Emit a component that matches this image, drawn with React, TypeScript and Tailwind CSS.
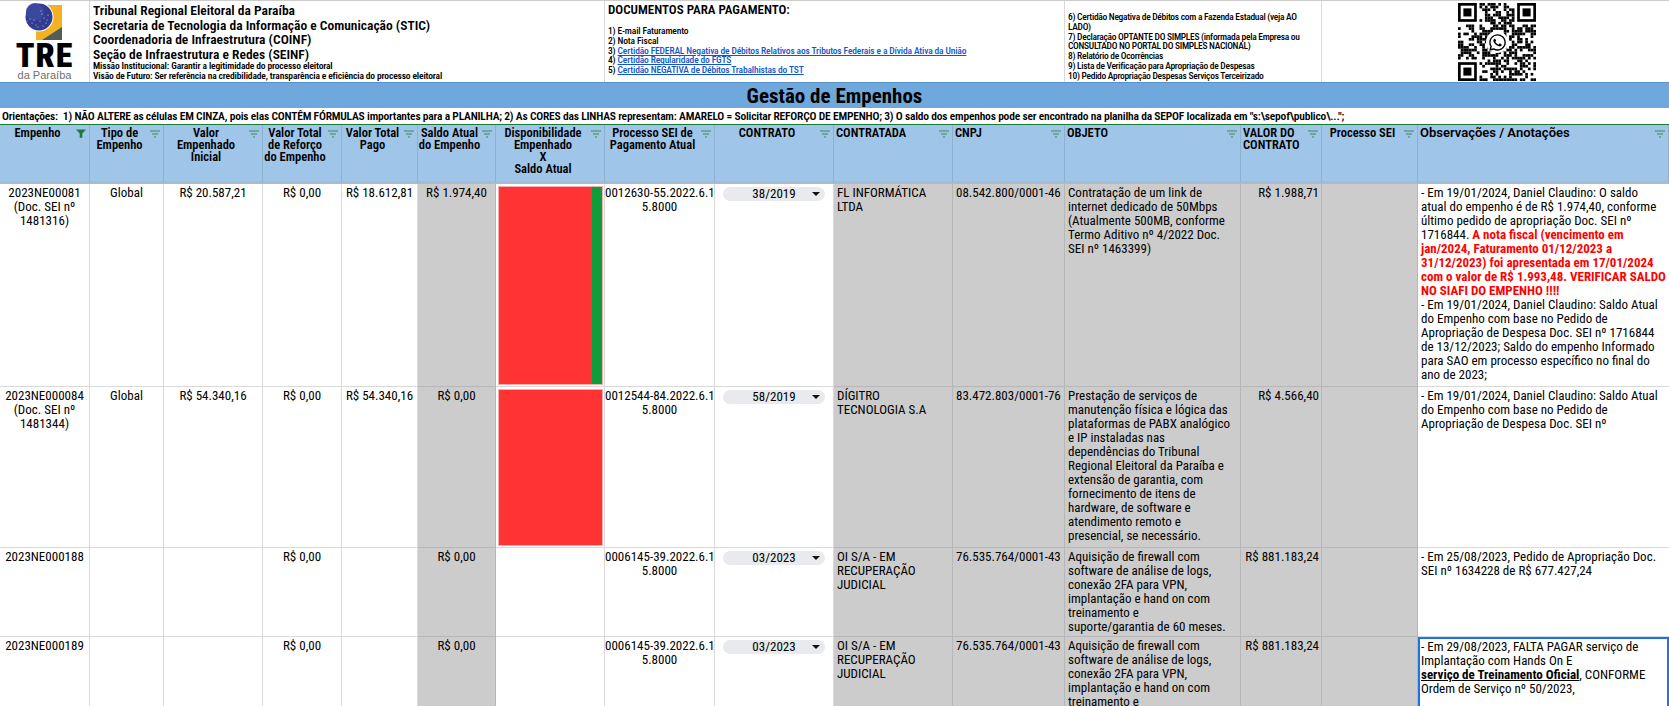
import type { ReactNode } from "react";
import { FaWhatsapp } from "react-icons/fa";

const widths = [90, 74, 99, 79, 76, 78, 109, 110, 119, 119, 112, 176, 81, 96, 251];

function FilterIcon({ active }: { active?: boolean }) {
  if (active) {
    return (
      <svg viewBox="0 0 10 9" className="absolute top-[4px] right-[3px] w-[10px] h-[9px]">
        <path d="M0 0.5h10L6.3 4.6V8.8H3.7V4.6z" fill="#1d7a3c" />
      </svg>
    );
  }
  return (
    <svg viewBox="0 0 10 8" className="absolute top-[5px] right-[3px] w-[10px] h-[8px]">
      <path d="M0 1h10M2 4h6M4 7h2" stroke="#5f9f7f" strokeWidth="1.3" fill="none" />
    </svg>
  );
}

function Head({ lines, left, active, wide }: { lines: string[]; left?: boolean; active?: boolean; wide?: boolean }) {
  return (
    <th
      className={`relative align-top p-0 pt-[2px] border-r border-b-[3px] border-r-[#8fb1d0] border-b-[#a9bccf] font-semibold leading-[12px] ${
        wide ? "text-[13px] font-stretch-[88%]" : "text-[12.5px] font-stretch-[75%]"
      } ${left ? "text-left pl-[2px]" : "text-center pr-[14px]"}`}
    >
      {lines.map((l, i) => (
        <div key={i} className="whitespace-nowrap">{l}</div>
      ))}
      <FilterIcon active={active} />
    </th>
  );
}

function Cell({
  lines,
  align = "center",
  gray,
  last,
}: {
  lines?: string[];
  align?: "left" | "center" | "right";
  gray?: boolean;
  last?: boolean;
}) {
  const a = align === "left" ? "text-left pl-[3px]" : align === "right" ? "text-right pr-[2px]" : "text-center";
  return (
    <td
      className={`align-top p-0 pt-[2px] overflow-hidden border-b ${last ? "" : "border-r"} ${a} ${
        gray ? "bg-[#cccccc] border-[#b7b7b7]" : "bg-white border-[#dadada]"
      }`}
    >
      {(lines ?? []).map((l, i) => (
        <div key={i} className="whitespace-nowrap">{l}</div>
      ))}
    </td>
  );
}

function Bar({ full, height }: { full: boolean; height: string }) {
  return (
    <td className="align-top p-0 bg-white border-r border-b border-[#dadada]">
      <div className={`flex ml-[2px] mt-[2px] w-[105px] border border-[#f3b0b0] ${height}`}>
        <div className="flex-1 bg-[#ff3333]" />
        {!full && <div className="w-[10px] bg-[#0f9d3c]" />}
      </div>
    </td>
  );
}

function BlankBar() {
  return <td className="p-0 bg-white border-r border-b border-[#dadada]" />;
}

function Chip({ label }: { label: string }) {
  return (
    <td className="align-top p-0 pt-[3px] bg-white border-r border-b border-[#dadada]">
      <div className="relative mx-[8px] h-[14px] rounded-full bg-[#e8eaed] text-center leading-[14px]">
        {label}
        <span className="absolute right-[5px] top-[5px] w-0 h-0 border-x-[4px] border-x-transparent border-t-[4px] border-t-[#111]" />
      </div>
    </td>
  );
}

function Qr() {
  const n = 29;
  let seed = 4721;
  const rnd = () => {
    seed = (seed * 1103515245 + 12345) & 0x7fffffff;
    return (seed >> 12) % 100;
  };
  const rects: ReactNode[] = [];
  const inFinder = (x: number, y: number) =>
    (x < 8 && y < 8) || (x >= n - 8 && y < 8) || (x < 8 && y >= n - 8);
  for (let y = 0; y < n; y++) {
    for (let x = 0; x < n; x++) {
      if (inFinder(x, y)) continue;
      if (rnd() < 52) rects.push(<rect key={`${x}-${y}`} x={x} y={y} width={1} height={1} />);
    }
  }
  const finder = (x: number, y: number) => (
    <g key={`f${x}${y}`}>
      <rect x={x} y={y} width={7} height={7} />
      <rect x={x + 1} y={y + 1} width={5} height={5} fill="#fff" />
      <rect x={x + 2} y={y + 2} width={3} height={3} />
    </g>
  );
  return (
    <div className="relative w-[78px] h-[78px]">
      <svg viewBox="0 0 29 29" className="w-[78px] h-[78px]" fill="#000">
        {rects}
        {finder(0, 0)}
        {finder(22, 0)}
        {finder(0, 22)}
      </svg>
      <div className="absolute left-[28px] top-[28px] w-[22px] h-[22px] rounded-full bg-white flex items-center justify-center">
        <FaWhatsapp className="w-[19px] h-[19px] text-black" />
      </div>
    </div>
  );
}

function Logo() {
  return (
    <div className="w-[90px] shrink-0 h-full border-r border-[#d9d9d9] flex flex-col items-center">
      <svg viewBox="0 0 90 41" className="w-[90px] h-[41px] shrink-0">
        <path d="M36 4H62V39H36z" fill="#f4b223" />
        <path d="M62 26V39H42z" fill="#4f5f58" />
        <circle cx="39" cy="16" r="14.5" fill="#fff" />
        <circle cx="39" cy="16" r="13.5" fill="#2f3c8f" />
        <circle cx="35" cy="11" r="9" fill="#3a489e" />
        {[
          [32, 22],[36, 24],[40, 20],[44, 17],[42, 13],[46, 22],[30, 18],[38, 26],[43, 25],[48, 14],[34, 19],[41, 10],[27, 20],[47, 19],
        ].map(([x, y], i) => (
          <circle key={i} cx={x} cy={y} r="0.6" fill="#cfd6f0" />
        ))}
      </svg>
      <div className="h-[25px] mt-[1px] font-black text-[34px] leading-[25px] tracking-[1px] font-stretch-[86%] text-black">
        TRE
      </div>
      <div className="mt-[2px] font-['Liberation_Sans',sans-serif] text-[11px] leading-[11px] text-[#707070]">
        da Paraíba
      </div>
    </div>
  );
}

const firewall = [
  "Aquisição de firewall com",
  "software de análise de logs,",
  "conexão 2FA para VPN,",
  "implantação e hand on com",
  "treinamento e",
  "suporte/garantia de 60 meses.",
];

export default function App() {
  return (
    <div className="w-[1669px] h-[706px] overflow-hidden bg-white text-black font-['Roboto',sans-serif] font-stretch-[80%] text-[13px] leading-[14px]">
      {/* Top band */}
      <div className="flex h-[82px] border-t border-[#cccccc]">
        <Logo />
        <div className="w-[515px] shrink-0 border-r border-[#d9d9d9] pl-[3px] pt-[2px]">
          <div className="font-semibold text-[13.5px] leading-[14.5px]">
            <div>Tribunal Regional Eleitoral da Paraíba</div>
            <div>Secretaria de Tecnologia da Informação e Comunicação (STIC)</div>
            <div>Coordenadoria de Infraestrutura (COINF)</div>
            <div>Seção de Infraestrutura e Redes (SEINF)</div>
          </div>
          <div className="font-semibold text-[9.5px] leading-[10px] font-stretch-[75%] tracking-[-0.15px]">
            <div>Missão Institucional: Garantir a legitimidade do processo eleitoral</div>
            <div>Visão de Futuro: Ser referência na credibilidade, transparência e eficiência do processo eleitoral</div>
          </div>
        </div>
        <div className="w-[460px] shrink-0 border-r border-[#d9d9d9] pl-[3px] pt-[2px]">
          <div className="font-semibold text-[13px] leading-[14px]">DOCUMENTOS PARA PAGAMENTO:</div>
          <div className="mt-[9px] font-medium text-[9.5px] leading-[9.8px] font-stretch-[75%] tracking-[-0.15px]">
            <div>1) E-mail Faturamento</div>
            <div>2) Nota Fiscal</div>
            <div>3) <span className="text-[#1155cc] underline">Certidão FEDERAL Negativa de Débitos Relativos aos Tributos Federais e a Dívida Ativa da União</span></div>
            <div>4) <span className="text-[#1155cc] underline">Certidão Regularidade do FGTS</span></div>
            <div>5) <span className="text-[#1155cc] underline">Certidão NEGATIVA de Débitos Trabalhistas do TST</span></div>
          </div>
        </div>
        <div className="w-[257px] shrink-0 border-r border-[#d9d9d9] pl-[3px] pt-[11px] font-medium text-[9.5px] leading-[9.8px] font-stretch-[75%] tracking-[-0.3px] whitespace-nowrap">
          <div>6) Certidão Negativa de Débitos com a Fazenda Estadual (veja AO</div>
          <div>LADO)</div>
          <div>7) Declaração OPTANTE DO SIMPLES (informada pela Empresa ou</div>
          <div>CONSULTADO NO PORTAL DO SIMPLES NACIONAL)</div>
          <div>8) Relatório de Ocorrências</div>
          <div>9) Lista de Verificação para Apropriação de Despesas</div>
          <div>10) Pedido Apropriação Despesas Serviços Terceirizado</div>
        </div>
        <div className="flex-1 pt-[2px] pl-[136px]">
          <Qr />
        </div>
      </div>

      {/* Title */}
      <div className="h-[26px] bg-[#6fa8dc] border-t border-[#5b93c7] flex items-center justify-center font-bold text-[21px] leading-[24px]">
        Gestão de Empenhos
      </div>

      {/* Guidance */}
      <div className="h-[17px] border-b border-[#1a7a3a] pl-[2px] font-semibold text-[11.5px] leading-[16px] font-stretch-[75%] tracking-[-0.2px] whitespace-nowrap">
        Orientações:&nbsp; 1) NÃO ALTERE as células EM CINZA, pois elas CONTÊM FÓRMULAS importantes para a PLANILHA; 2) As CORES das LINHAS representam: AMARELO = Solicitar REFORÇO DE EMPENHO; 3) O saldo dos empenhos pode ser encontrado na planilha da SEPOF localizada em "s:\sepof\publico\...";
      </div>

      {/* Sheet */}
      <table className="table-fixed w-[1669px] border-separate border-spacing-0">
        <colgroup>
          {widths.map((w, i) => (
            <col key={i} width={w} />
          ))}
        </colgroup>
        <thead>
          <tr className="h-[59px] bg-[#9fc5e8]">
            <Head lines={["Empenho"]} active />
            <Head lines={["Tipo de", "Empenho"]} />
            <Head lines={["Valor", "Empenhado", "Inicial"]} />
            <Head lines={["Valor Total", "de Reforço", "do Empenho"]} />
            <Head lines={["Valor Total", "Pago"]} />
            <Head lines={["Saldo Atual", "do Empenho"]} />
            <Head lines={["Disponibilidade", "Empenhado", "X", "Saldo Atual"]} />
            <Head lines={["Processo SEI de", "Pagamento Atual"]} />
            <Head lines={["CONTRATO"]} />
            <Head lines={["CONTRATADA"]} left />
            <Head lines={["CNPJ"]} left />
            <Head lines={["OBJETO"]} left />
            <Head lines={["VALOR DO", "CONTRATO"]} left />
            <Head lines={["Processo SEI"]} />
            <Head lines={["Observações / Anotações"]} left wide />
          </tr>
        </thead>
        <tbody>
          <tr className="h-[203px]">
            <Cell lines={["2023NE00081", "(Doc. SEI nº", "1481316)"]} />
            <Cell lines={["Global"]} />
            <Cell lines={["R$ 20.587,21"]} />
            <Cell lines={["R$ 0,00"]} />
            <Cell lines={["R$ 18.612,81"]} />
            <Cell lines={["R$ 1.974,40"]} gray />
            <Bar full={false} height="h-[199px]" />
            <Cell lines={["0012630-55.2022.6.1", "5.8000"]} />
            <Chip label="38/2019" />
            <Cell lines={["FL INFORMÁTICA", "LTDA"]} align="left" gray />
            <Cell lines={["08.542.800/0001-46"]} align="left" gray />
            <Cell
              lines={[
                "Contratação de um link de",
                "internet dedicado de 50Mbps",
                "(Atualmente 500MB, conforme",
                "Termo Aditivo nº 4/2022 Doc.",
                "SEI nº 1463399)",
              ]}
              align="left"
              gray
            />
            <Cell lines={["R$ 1.988,71"]} align="right" gray />
            <Cell gray />
            <td className="align-top p-0 pt-[2px] pl-[3px] bg-white border-b border-[#dadada] whitespace-nowrap">
              <div>- Em 19/01/2024, Daniel Claudino: O saldo</div>
              <div>atual do empenho é de R$ 1.974,40, conforme</div>
              <div>último pedido de apropriação Doc. SEI nº</div>
              <div>
                1716844. <b className="text-[#ff0000]">A nota fiscal (vencimento em</b>
              </div>
              <div className="font-bold text-[#ff0000]">
                <div>jan/2024, Faturamento 01/12/2023 a</div>
                <div>31/12/2023) foi apresentada em 17/01/2024</div>
                <div>com o valor de R$ 1.993,48. VERIFICAR SALDO</div>
                <div>NO SIAFI DO EMPENHO !!!!</div>
              </div>
              <div>- Em 19/01/2024, Daniel Claudino: Saldo Atual</div>
              <div>do Empenho com base no Pedido de</div>
              <div>Apropriação de Despesa Doc. SEI nº 1716844</div>
              <div>de 13/12/2023; Saldo do empenho Informado</div>
              <div>para SAO em processo específico no final do</div>
              <div>ano de 2023;</div>
            </td>
          </tr>
          <tr className="h-[161px]">
            <Cell lines={["2023NE000084", "(Doc. SEI nº", "1481344)"]} />
            <Cell lines={["Global"]} />
            <Cell lines={["R$ 54.340,16"]} />
            <Cell lines={["R$ 0,00"]} />
            <Cell lines={["R$ 54.340,16"]} />
            <Cell lines={["R$ 0,00"]} gray />
            <Bar full height="h-[157px]" />
            <Cell lines={["0012544-84.2022.6.1", "5.8000"]} />
            <Chip label="58/2019" />
            <Cell lines={["DÍGITRO", "TECNOLOGIA S.A"]} align="left" gray />
            <Cell lines={["83.472.803/0001-76"]} align="left" gray />
            <Cell
              lines={[
                "Prestação de serviços de",
                "manutenção física e lógica das",
                "plataformas de PABX analógico",
                "e IP instaladas nas",
                "dependências do Tribunal",
                "Regional Eleitoral da Paraíba e",
                "extensão de garantia, com",
                "fornecimento de itens de",
                "hardware, de software e",
                "atendimento remoto e",
                "presencial, se necessário.",
              ]}
              align="left"
              gray
            />
            <Cell lines={["R$ 4.566,40"]} align="right" gray />
            <Cell gray />
            <Cell
              lines={[
                "- Em 19/01/2024, Daniel Claudino: Saldo Atual",
                "do Empenho com base no Pedido de",
                "Apropriação de Despesa Doc. SEI nº",
              ]}
              align="left"
              last
            />
          </tr>
          <tr className="h-[89px]">
            <Cell lines={["2023NE000188"]} />
            <Cell />
            <Cell />
            <Cell lines={["R$ 0,00"]} />
            <Cell />
            <Cell lines={["R$ 0,00"]} gray />
            <BlankBar />
            <Cell lines={["0006145-39.2022.6.1", "5.8000"]} />
            <Chip label="03/2023" />
            <Cell lines={["OI S/A - EM", "RECUPERAÇÃO", "JUDICIAL"]} align="left" gray />
            <Cell lines={["76.535.764/0001-43"]} align="left" gray />
            <Cell lines={firewall} align="left" gray />
            <Cell lines={["R$ 881.183,24"]} align="right" gray />
            <Cell gray />
            <Cell
              lines={["- Em 25/08/2023, Pedido de Apropriação Doc.", "SEI nº 1634228 de R$ 677.427,24"]}
              align="left"
              last
            />
          </tr>
          <tr className="h-[89px]">
            <Cell lines={["2023NE000189"]} />
            <Cell />
            <Cell />
            <Cell lines={["R$ 0,00"]} />
            <Cell />
            <Cell lines={["R$ 0,00"]} gray />
            <BlankBar />
            <Cell lines={["0006145-39.2022.6.1", "5.8000"]} />
            <Chip label="03/2023" />
            <Cell lines={["OI S/A - EM", "RECUPERAÇÃO", "JUDICIAL"]} align="left" gray />
            <Cell lines={["76.535.764/0001-43"]} align="left" gray />
            <Cell lines={firewall} align="left" gray />
            <Cell lines={["R$ 881.183,24"]} align="right" gray />
            <Cell gray />
            <td className="align-top p-0 pt-[1px] pl-[1px] bg-white border-2 border-[#1a73e8] whitespace-nowrap">
              <div>- Em 29/08/2023, FALTA PAGAR serviço de</div>
              <div>Implantação com Hands On E</div>
              <div>
                <b className="underline">serviço de Treinamento Oficial</b>, CONFORME
              </div>
              <div>Ordem de Serviço nº 50/2023,</div>
            </td>
          </tr>
        </tbody>
      </table>
    </div>
  );
}
